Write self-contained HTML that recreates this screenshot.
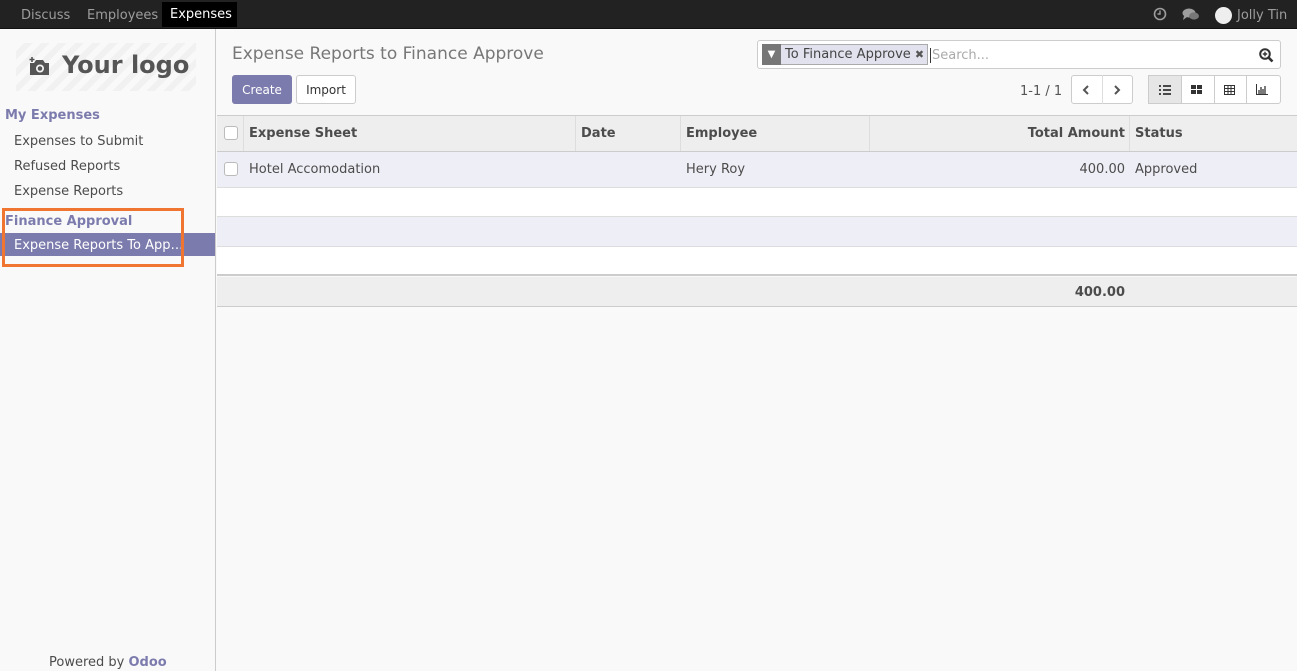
<!DOCTYPE html>
<html><head><style>
*{box-sizing:border-box;margin:0;padding:0}
body{width:1297px;height:671px;overflow:hidden;font-family:"DejaVu Sans","Liberation Sans",sans-serif;font-size:13px;color:#4c4c4c;background:#f9f9f9;position:relative}
.nav{position:absolute;left:0;top:0;width:1297px;height:29px;background:#222;border-bottom:1px solid #111}
.nav span{position:absolute;top:1px;height:27px;line-height:29px;color:#9d9d9d;font-size:13px}
.side{position:absolute;left:0;top:29px;width:216px;height:642px;background:#f9f9f9;border-right:1px solid #ccc}
.side .h{position:absolute;left:5px;color:#7c7bad;font-weight:bold;font-size:13px}
.side .i{position:absolute;left:14px;color:#4c4c4c}
.main{position:absolute;left:216px;top:29px;width:1081px;height:642px;background:#f9f9f9}
.abs{position:absolute}
.btn{position:absolute;height:29px;line-height:29px;font-size:13px;border-radius:3px;text-align:center}
.row{position:absolute;left:217px;width:1080px;border-bottom:1px solid #ddd}
.cb{position:absolute;left:7px;width:14px;height:14px;border:1px solid #bbb;border-radius:3px;background:#fff}
</style></head><body>
<div class="nav">
<span style="left:21px">Discuss</span>
<span style="left:87px">Employees</span>
<span style="left:162px;top:2px;background:#000;color:#fff;padding:0 8px;width:75px;height:25px;line-height:25px">Expenses</span>
<svg class="abs" style="position:absolute;left:1153px;top:7px" width="14" height="14" viewBox="0 0 14 14"><circle cx="7" cy="7" r="5.5" fill="none" stroke="#9d9d9d" stroke-width="1.6"/><path d="M7 3.5V7H4.5" fill="none" stroke="#9d9d9d" stroke-width="1.4"/></svg>
<svg style="position:absolute;left:1182px;top:8px" width="18" height="14" viewBox="0 0 18 14"><ellipse cx="7" cy="5" rx="6.5" ry="4.5" fill="#9d9d9d"/><path d="M2 8L1 12L5 9Z" fill="#9d9d9d"/><ellipse cx="12" cy="8" rx="5" ry="3.6" fill="#777"/></svg>
<div style="position:absolute;left:1215px;top:7px;width:17px;height:17px;border-radius:50%;background:#eee"></div>
<span style="left:1237px;color:#9d9d9d">Jolly Tin</span>
</div>
<div class="side">
<div class="abs" style="left:16px;top:14px;width:180px;height:48px;background:repeating-linear-gradient(135deg,#f9f9f9 0 6px,#f1f1f1 6px 12px)"></div>
<svg style="position:absolute;left:29px;top:28px" width="22" height="20" viewBox="0 0 22 20"><path d="M1 6h4l2-3h7l2 3h4v12H1z" fill="#555"/><circle cx="11" cy="11.5" r="4" fill="#f6f6f6"/><circle cx="11" cy="11.5" r="2.3" fill="#555"/><path d="M3 0v5M0.5 2.5h5" stroke="#555" stroke-width="1.6"/></svg>
<div class="abs" style="left:62px;top:22px;font-family:'DejaVu Sans',sans-serif;font-size:24px;font-weight:bold;color:#555">Your logo</div>
<div class="h" style="top:79px">My Expenses</div>
<div class="i" style="top:105px">Expenses to Submit</div>
<div class="i" style="top:130px">Refused Reports</div>
<div class="i" style="top:155px">Expense Reports</div>
<div class="h" style="top:185px">Finance Approval</div>
<div class="abs" style="left:0;top:204px;width:215px;height:23px;background:#7c7bad"></div>
<div class="i" style="top:209px;color:#fff;width:168px;white-space:nowrap;overflow:hidden">Expense Reports To App…</div>
<div class="abs" style="left:2px;top:179px;width:182px;height:59px;border:3px solid #f07530"></div>
<div class="abs" style="left:49px;top:626px;color:#4c4c4c">Powered by <b style="color:#7c7bad">Odoo</b></div>
</div>
<div class="main">
<div class="abs" style="left:16px;top:15px;font-size:17px;color:#777">Expense Reports to Finance Approve</div>
<div class="btn" style="left:16px;top:46px;width:60px;background:#7c7bad;color:#fff;font-size:12px;line-height:31px">Create</div>
<div class="btn" style="left:80px;top:46px;width:60px;background:#fff;border:1px solid #ccc;color:#333;font-size:12px;line-height:29px">Import</div>
<div class="abs" style="left:541px;top:11px;width:524px;height:29px;border:1px solid #ccc;border-radius:3px;background:#fff"></div>
<div class="abs" style="left:546px;top:15px;width:166px;height:21px;background:#e2e2ef;border:1px solid #aaa"></div>
<div class="abs" style="left:546px;top:15px;width:19px;height:21px;background:#777;color:#fff;text-align:center;font-size:10px;line-height:21px">▼</div>
<div class="abs" style="left:569px;top:18px;color:#444;white-space:nowrap">To Finance Approve <b style="color:#555;font-size:11px">✖</b></div>
<div class="abs" style="left:714px;top:19px;color:#aaa;border-left:1px solid #333;padding-left:1px">Search...</div>
<svg style="position:absolute;left:1043px;top:19px" width="15" height="15" viewBox="0 0 15 15"><circle cx="6" cy="6" r="4.8" fill="none" stroke="#333" stroke-width="2"/><path d="M9.5 9.5L13.5 13.5" stroke="#333" stroke-width="2.6"/><path d="M6 3.8v4.4M3.8 6h4.4" stroke="#333" stroke-width="1.4"/></svg>
<div class="abs" style="left:804px;top:55px;color:#555">1-1 / 1</div>
<div class="abs" style="left:855px;top:46px;width:62px;height:29px;border:1px solid #ccc;border-radius:3px;background:#fff"></div>
<div class="abs" style="left:886px;top:46px;width:1px;height:29px;background:#ddd"></div>
<svg style="position:absolute;left:866px;top:56px" width="8" height="10"><path d="M6 1L2 5l4 4" fill="none" stroke="#555" stroke-width="2"/></svg>
<svg style="position:absolute;left:897px;top:56px" width="8" height="10"><path d="M2 1l4 4-4 4" fill="none" stroke="#555" stroke-width="2"/></svg>
<div class="abs" style="left:932px;top:46px;width:133px;height:29px;border:1px solid #ccc;border-radius:3px;background:#fff"></div>
<div class="abs" style="left:932px;top:46px;width:34px;height:29px;background:#e6e6e6;border:1px solid #ccc"></div>
<div class="abs" style="left:998px;top:46px;width:1px;height:29px;background:#ccc"></div>
<div class="abs" style="left:1030px;top:46px;width:1px;height:29px;background:#ccc"></div>
<svg style="position:absolute;left:943px;top:56px" width="12" height="10"><path d="M0 1h2M4 1h8M0 5h2M4 5h8M0 9h2M4 9h8" stroke="#333" stroke-width="1.8"/></svg>
<svg style="position:absolute;left:975px;top:56px" width="11" height="10"><rect x="0" y="0" width="5" height="4" fill="#333"/><rect x="6" y="0" width="5" height="4" fill="#333"/><rect x="0" y="5" width="5" height="4" fill="#333"/><rect x="6" y="5" width="5" height="4" fill="#333"/></svg>
<svg style="position:absolute;left:1008px;top:56px" width="11" height="10"><rect x="0.5" y="0.5" width="10" height="9" fill="none" stroke="#333"/><path d="M0 3.5h11M0 6.5h11M4 0v10M7 0v10" stroke="#333"/></svg>
<svg style="position:absolute;left:1040px;top:55px" width="12" height="11"><path d="M0.5 0v10.5H12" stroke="#333" fill="none"/><path d="M3 10V6M5 10V3M7 10V5M9 10V2" stroke="#333" stroke-width="1.3"/></svg>
</div>
<div class="row" style="top:115px;height:37px;background:#eee;border-top:1px solid #ccc;border-bottom:1px solid #ccc;font-weight:bold;color:#4c4c4c">
<div class="cb" style="top:10px"></div>
<div class="abs" style="left:26px;top:0;height:35px;border-left:1px solid #ddd"></div>
<div class="abs" style="left:32px;top:10px">Expense Sheet</div>
<div class="abs" style="left:358px;top:0;height:35px;border-left:1px solid #ddd"></div>
<div class="abs" style="left:364px;top:10px">Date</div>
<div class="abs" style="left:463px;top:0;height:35px;border-left:1px solid #ddd"></div>
<div class="abs" style="left:469px;top:10px">Employee</div>
<div class="abs" style="left:652px;top:0;height:35px;border-left:1px solid #ddd"></div>
<div class="abs" style="right:172px;top:10px">Total Amount</div>
<div class="abs" style="left:912px;top:0;height:35px;border-left:1px solid #ddd"></div>
<div class="abs" style="left:918px;top:10px">Status</div>
</div>
<div class="row" style="top:152px;height:36px;background:#eeeef6">
<div class="cb" style="top:10px"></div>
<div class="abs" style="left:32px;top:10px">Hotel Accomodation</div>
<div class="abs" style="left:469px;top:10px">Hery Roy</div>
<div class="abs" style="right:172px;top:10px">400.00</div>
<div class="abs" style="left:918px;top:10px">Approved</div>
</div>
<div class="row" style="top:188px;height:29px;background:#fff"></div>
<div class="row" style="top:217px;height:30px;background:#eeeef6"></div>
<div class="row" style="top:247px;height:29px;background:#fff;border-bottom:2px solid #ccc"></div>
<div class="row" style="top:277px;height:30px;background:#eee;border-bottom:1px solid #ccc;font-weight:bold">
<div class="abs" style="right:172px;top:8px">400.00</div>
</div>
</body></html>
